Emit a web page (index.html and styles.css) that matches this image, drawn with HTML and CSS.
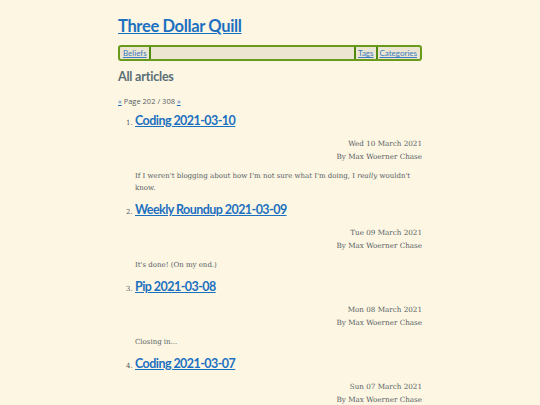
FILE: index.html
```html
<!DOCTYPE html>
<html>
<head>
<meta charset="utf-8">
<link rel="stylesheet" href="styles.css">
</head>
<body>
<div class="page">
  <header class="site-header">
    <h1 class="site-title"><a href="#">Three Dollar Quill</a></h1>
    <nav class="nav">
      <a class="nav-link sep-right" href="#">Beliefs</a>
      <span class="nav-fill"></span>
      <a class="nav-link sep-left sep-right" href="#">Tags</a>
      <a class="nav-link" href="#">Categories</a>
    </nav>
  </header>
  <h2 class="section-title">All articles</h2>
  <p class="pager"><a href="#">«</a> Page 202 / 308 <a href="#">»</a></p>
  <ol class="articles">
    <li class="article">
      <h3 class="article-title"><a href="#">Coding 2021-03-10</a></h3>
      <div class="meta"><div>Wed 10 March 2021</div><div>By Max Woerner Chase</div></div>
      <p class="excerpt">If I weren't blogging about how I'm not sure what I'm doing, I <em>really</em> wouldn't know.</p>
    </li>
    <li class="article">
      <h3 class="article-title"><a href="#">Weekly Roundup 2021-03-09</a></h3>
      <div class="meta"><div>Tue 09 March 2021</div><div>By Max Woerner Chase</div></div>
      <p class="excerpt">It's done! (On my end.)</p>
    </li>
    <li class="article">
      <h3 class="article-title"><a href="#">Pip 2021-03-08</a></h3>
      <div class="meta"><div>Mon 08 March 2021</div><div>By Max Woerner Chase</div></div>
      <p class="excerpt">Closing in...</p>
    </li>
    <li class="article">
      <h3 class="article-title"><a href="#">Coding 2021-03-07</a></h3>
      <div class="meta"><div>Sun 07 March 2021</div><div>By Max Woerner Chase</div></div>
      <p class="excerpt">More progress.</p>
    </li>
  </ol>
</div>
</body>
</html>
```

FILE: styles.css
```css
html, body {
  margin: 0;
  padding: 0;
  background: #fdf6e3;
}
body {
  font-family: "DejaVu Serif", serif;
  color: #575f63;
}
.page {
  width: 304px;
  margin: 0 auto;
  padding-top: 14px;
}
a {
  color: #1c70c0;
}
.site-title {
  margin: 0;
  font-family: Lato, sans-serif;
  font-weight: 700;
  font-size: 16.5px;
  letter-spacing: -0.35px;
  line-height: 24px;
}
.nav {
  margin-top: 7px;
  display: flex;
  align-items: center;
  height: 12px;
  border: 2px solid #6a9a1c;
  border-radius: 3px;
  background: #ece5d1;
  padding: 0 1px;
  font-family: Lato, sans-serif;
  font-size: 8px;
  line-height: 12px;
}
.nav-link {
  padding: 0 2px;
  color: #3a7cc0;
}
.sep-right { border-right: 2px solid #4d8a0f; }
.sep-left { border-left: 2px solid #4d8a0f; }
.nav-fill { flex: 1; }
.section-title {
  margin: 8px 0 0;
  font-family: Lato, sans-serif;
  font-size: 12.5px;
  letter-spacing: -0.2px;
  line-height: 16px;
  color: #586e75;
}
.pager {
  margin: 10px 0 0;
  font-family: "Open Sans", sans-serif;
  font-size: 7.5px;
  line-height: 12px;
  color: #575f63;
}
.articles {
  margin: 4px 0 0;
  padding-left: 17px;
  font-family: "DejaVu Serif", serif;
  font-size: 7px;
}
.article {
  margin: 0;
}
.article::marker {
  font-size: 7px;
  color: #575f63;
}
.article-title {
  margin: 0;
  font-family: Lato, sans-serif;
  font-size: 12.5px;
  letter-spacing: -0.55px;
  line-height: 20px;
  font-weight: 700;
}
.meta {
  margin-top: 7px;
  text-align: right;
  font-size: 7.2px;
  line-height: 12.5px;
  color: #575f63;
}
.excerpt {
  margin: 7px 0 0;
  font-size: 7px;
  line-height: 12px;
  color: #575f63;
  padding-bottom: 6px;
}
```
